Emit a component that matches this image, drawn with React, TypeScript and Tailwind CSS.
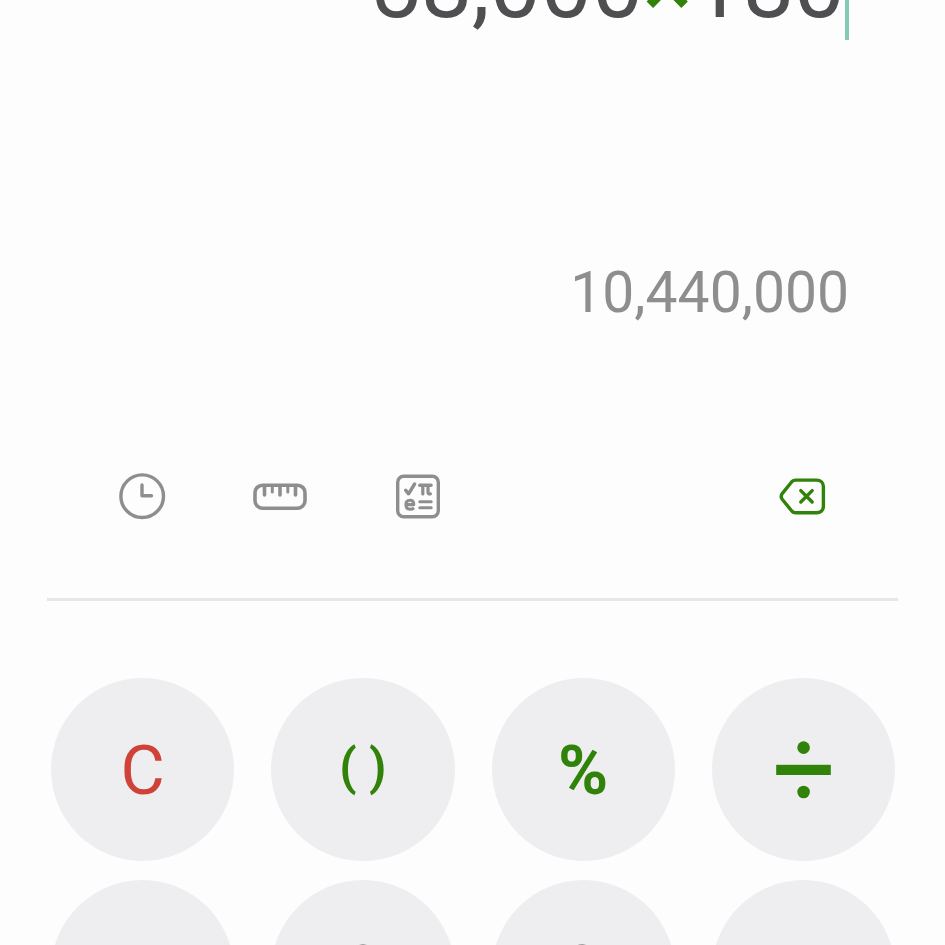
import type { ReactNode } from "react";

function ToolButton({ label, children }: { label: string; children: ReactNode }) {
  return (
    <button type="button" aria-label={label} className="size-[54px] shrink-0 cursor-pointer">
      <svg viewBox="0 0 54 54" fill="none" stroke="currentColor" className="size-full" aria-hidden="true">
        {children}
      </svg>
    </button>
  );
}

function HistoryIcon() {
  return (
    <>
      <circle cx="27.2" cy="27.2" r="21.3" strokeWidth="3.4" />
      <path d="M27 16V26.8H36.5" strokeWidth="3.4" strokeLinecap="round" strokeLinejoin="round" />
    </>
  );
}

function RulerIcon() {
  return (
    <>
      <rect x="2" y="16.2" width="50" height="23" rx="7.5" strokeWidth="3.6" />
      <path d="M11.5 17V26M27 17V26M42.5 17V26" strokeWidth="3.6" strokeLinecap="round" />
      <path d="M19.3 17V23M34.8 17V23" strokeWidth="3" strokeLinecap="round" />
    </>
  );
}

function ScientificIcon() {
  return (
    <>
      <rect x="6.7" y="7.2" width="40.6" height="40.6" rx="6" strokeWidth="3.4" />
      <path d="M14.6 21.2L17.6 24.8L23.6 15" strokeWidth="3.4" strokeLinecap="round" strokeLinejoin="round" />
      <path d="M28.8 16.2H40" strokeWidth="3.4" strokeLinecap="round" />
      <path d="M31.8 17V25M37 17V23C37 24.6 37.8 25.2 39.4 24.9" strokeWidth="3.2" strokeLinecap="round" />
      <path d="M15 35.6H22.8C22.8 32.8 21.4 31.3 19 31.3C16.5 31.3 14.9 33.1 14.9 35.8C14.9 38.6 16.6 40.2 19.2 40.2C20.8 40.2 22 39.8 23 38.8" strokeWidth="3.1" strokeLinejoin="round" />
      <path d="M28.8 32.8H40.2M28.8 38.8H40.2" strokeWidth="3" strokeLinecap="round" />
    </>
  );
}

function BackspaceIcon() {
  return (
    <>
      <path
        d="M19.5 11.1H40.5C44.8 11.1 47.4 13.7 47.4 17.6V37.2C47.4 41.1 44.8 43.7 40.5 43.7H19.5C18 43.7 17 43.3 16 42.3L6.2 30.2C4.9 28.4 4.9 26.4 6.2 24.6L16 12.5C17 11.5 18 11.1 19.5 11.1Z"
        strokeWidth="3.4"
        strokeLinejoin="round"
      />
      <path d="M24.8 21.6L36.2 33M36.2 21.6L24.8 33" strokeWidth="3.4" strokeLinecap="round" />
    </>
  );
}

function DivideSign() {
  return (
    <svg viewBox="0 0 56 60" fill="currentColor" className="h-[60px] w-14" aria-hidden="true">
      <circle cx="28.6" cy="7.6" r="6.3" />
      <rect x="1.2" y="24.8" width="54.6" height="10.2" />
      <circle cx="28.6" cy="52" r="6.3" />
    </svg>
  );
}

function TimesSign() {
  return (
    <svg viewBox="0 0 56 60" fill="none" stroke="currentColor" className="h-[60px] w-14" aria-hidden="true">
      <path d="M9 11L47 49M47 11L9 49" strokeWidth="9" />
    </svg>
  );
}

const keys: { label: string; face: ReactNode; style: string }[] = [
  { label: "Clear", face: "C", style: "pt-0.5 text-[68px] text-[#d04238]" },
  { label: "Parentheses", face: "( )", style: "pb-1.5 text-[50px] font-semibold text-[#318209]" },
  { label: "Percent", face: "%", style: "pt-0.5 text-[68px] font-bold text-[#318209]" },
  { label: "Divide", face: <DivideSign />, style: "text-[#318209]" },
  { label: "Seven", face: "7", style: "pt-0.5 text-[72px] text-[#4f4f52]" },
  { label: "Eight", face: "8", style: "pt-0.5 text-[72px] text-[#4f4f52]" },
  { label: "Nine", face: "9", style: "pt-0.5 text-[72px] text-[#4f4f52]" },
  { label: "Multiply", face: <TimesSign />, style: "text-[#318209]" },
];

export default function App() {
  return (
    <main className="flex h-screen flex-col overflow-hidden bg-[#fdfdfd] font-[Roboto,sans-serif]">
      <section aria-label="Display" className="shrink-0 px-24">
        <div className="flex h-10 items-end justify-end">
          <p className="relative shrink-0 pr-1 text-[91px] leading-[108px] whitespace-nowrap text-[#4f4f52]">
            58,000<span className="font-medium text-[#318209]">×</span>180
            <span aria-hidden="true" className="absolute inset-y-0 right-0 w-1 bg-[#84cbb7]" />
          </p>
        </div>
        <output className="mt-[219px] block text-right text-[57px] leading-[68px] text-[#8e8e8e]">10,440,000</output>
      </section>

      <nav aria-label="Tools" className="mt-[142px] flex shrink-0 gap-[84px] px-[115px] text-[#8e8e8e]">
        <ToolButton label="History"><HistoryIcon /></ToolButton>
        <ToolButton label="Unit converter"><RulerIcon /></ToolButton>
        <ToolButton label="Scientific mode"><ScientificIcon /></ToolButton>
        <div className="ml-auto flex text-[#318209]">
          <ToolButton label="Backspace"><BackspaceIcon /></ToolButton>
        </div>
      </nav>

      <hr className="mx-[47px] mt-[75px] shrink-0 border-t-3 border-[#e7e7e8]" />

      <section aria-label="Keypad" className="mt-[77px] grid shrink-0 grid-cols-4 gap-x-[37px] gap-y-[19px] pr-[50px] pl-[51px]">
        {keys.map((key) => (
          <button
            key={key.label}
            type="button"
            aria-label={key.label}
            className={`flex aspect-square cursor-pointer items-center justify-center rounded-full bg-[#eeeef0] leading-none ${key.style}`}
          >
            {key.face}
          </button>
        ))}
      </section>
    </main>
  );
}
